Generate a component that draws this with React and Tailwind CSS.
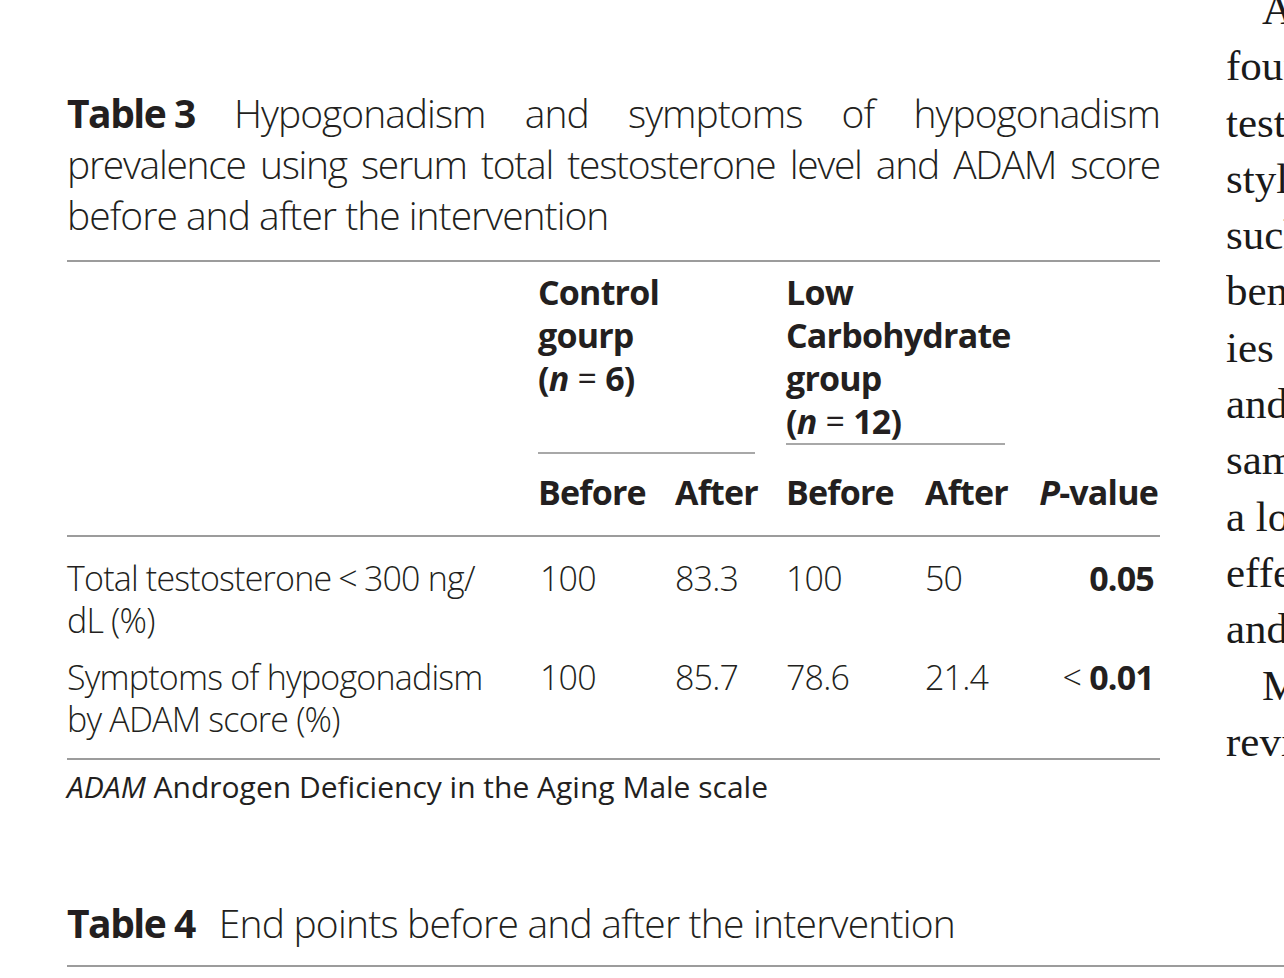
export default function App() {
  const f = { fontFamily: '"Open Sans", "Noto Sans", sans-serif' };
  const rightLines = [
    { t: "As in previous", indent: true },
    { t: "found that", indent: false },
    { t: "testosterone", indent: false },
    { t: "style", indent: false },
    { t: "such as", indent: false },
    { t: "beneficial", indent: false },
    { t: "ies have", indent: false },
    { t: "and the", indent: false },
    { t: "sample", indent: false },
    { t: "a low", indent: false },
    { t: "effect", indent: false },
    { t: "and", indent: false },
    { t: "Moreover", indent: true },
    { t: "reviewed", indent: false },
  ];
  return (
    <div className="w-[1284px] h-[978px] overflow-hidden bg-white text-[#231f20] flex flex-col">
      <div className="flex items-start">
        <div className="w-[1093px] ml-[67px] shrink-0" style={f}>
          <div className="pt-[87px] text-[39px] leading-[51px] font-light tracking-[-1px]">
            <div className="text-justify [text-align-last:justify] whitespace-nowrap">
              <span className="inline-block font-bold tracking-[-1.5px]">Table 3</span> Hypogonadism and symptoms of hypogonadism
            </div>
            <div className="text-justify [text-align-last:justify] whitespace-nowrap tracking-[-1.3px]">
              prevalence using serum total testosterone level and ADAM score
            </div>
            <div>before and after the intervention</div>
          </div>

          <div className="mt-[20px] border-t-2 border-[#9c9c9c]" />

          <div className="grid grid-cols-[471px_137px_111px_139px_113px_122px] text-[34px] leading-[43px] tracking-[-0.8px]">
            <div />
            <div className="col-span-2 pt-[9px] flex flex-col">
              <div className="font-bold">
                Control
                <br />
                gourp
                <br />
                (<i>n</i>
                <span className="mx-[9px] font-normal">=</span>6)
              </div>
              <div className="mt-auto w-[217px] border-t-2 border-[#a8a8a8]" />
            </div>
            <div className="col-span-2 pt-[9px] pb-[9px] flex flex-col">
              <div className="font-bold">
                Low
                <br />
                Carbohydrate
                <br />
                group
                <br />
                (<i>n</i>
                <span className="mx-[9px] font-normal">=</span>12)
              </div>
              <div className="w-[219px] border-t-2 border-[#a8a8a8]" />
            </div>
            <div />

            <div className="pt-[17px] pb-[21px]" />
            <div className="pt-[17px] pb-[21px] font-bold">Before</div>
            <div className="pt-[17px] pb-[21px] font-bold">After</div>
            <div className="pt-[17px] pb-[21px] font-bold">Before</div>
            <div className="pt-[17px] pb-[21px] font-bold">After</div>
            <div className="pt-[17px] pb-[21px] font-bold text-right pr-[2px]">
              <i>P</i>-value
            </div>
          </div>

          <div className="border-t-2 border-[#9c9c9c]" />

          <div className="grid grid-cols-[471px_137px_111px_139px_113px_122px] text-[34px] leading-[42px] font-light tracking-[-0.8px]">
            <div className="pt-[20px]">
              Total testosterone<span className="mx-[7px]">&lt;</span>300 ng/
              <br />
              dL (%)
            </div>
            <div className="pt-[20px] pl-[2px]">100</div>
            <div className="pt-[20px]">83.3</div>
            <div className="pt-[20px]">100</div>
            <div className="pt-[20px]">50</div>
            <div className="pt-[20px] text-right pr-[6px] font-bold">0.05</div>

            <div className="pt-[15px] pb-[18px]">
              Symptoms of hypogonadism
              <br />
              by ADAM score (%)
            </div>
            <div className="pt-[15px] pb-[18px] pl-[2px]">100</div>
            <div className="pt-[15px] pb-[18px]">85.7</div>
            <div className="pt-[15px] pb-[18px]">78.6</div>
            <div className="pt-[15px] pb-[18px]">21.4</div>
            <div className="pt-[15px] pb-[18px] text-right pr-[6px]">
              <span className="font-light mr-[8px]">&lt;</span>
              <span className="font-bold">0.01</span>
            </div>
          </div>

          <div className="border-t-2 border-[#9c9c9c]" />

          <div className="pt-[8px] text-[30px] leading-[38px]">
            <i>ADAM</i> Androgen Deficiency in the Aging Male scale
          </div>
        </div>

        <div
          className="ml-[66px] flex-1 overflow-hidden mt-[-18px] text-[43px] leading-[56.3px] text-[#1a1a1a]"
          style={{ fontFamily: '"Liberation Serif", "DejaVu Serif", serif' }}
        >
          {rightLines.map((l, i) => (
            <div key={i} className={`whitespace-nowrap ${l.indent ? "pl-[36px]" : ""}`}>
              {l.t}
            </div>
          ))}
        </div>
      </div>

      <div className="ml-[67px] mt-[91px]" style={f}>
        <div className="text-[39px] leading-[51px] font-light tracking-[-0.8px]">
          <span className="font-bold tracking-[-1.5px]">Table 4</span>
          <span className="ml-[24px]">End points before and after the intervention</span>
        </div>
        <div className="mt-[17px] border-t-2 border-[#9c9c9c]" />
      </div>
    </div>
  );
}
